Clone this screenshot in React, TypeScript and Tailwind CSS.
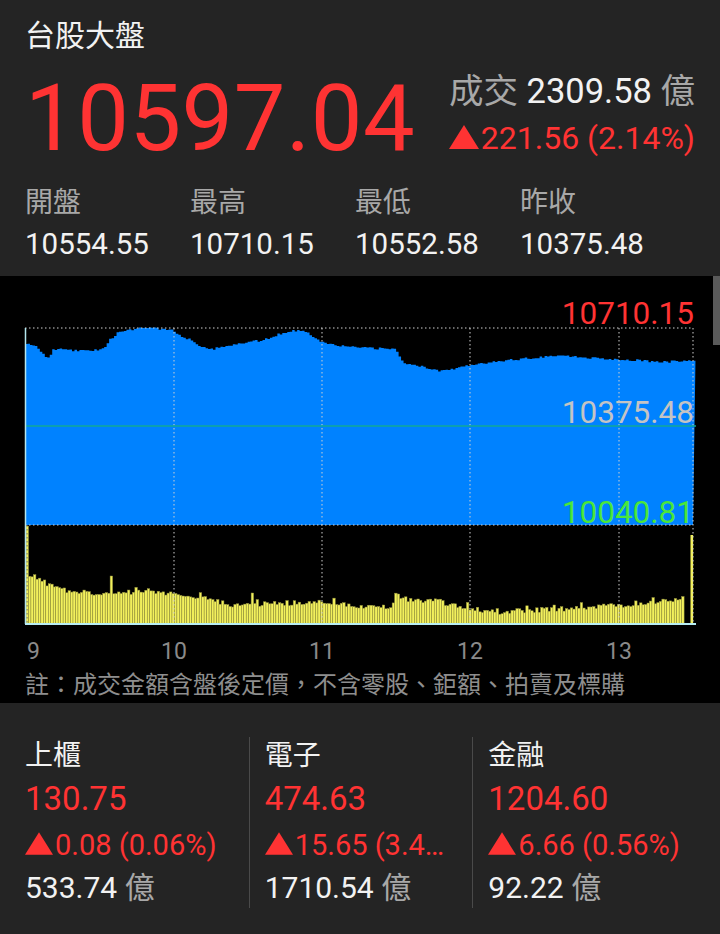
import React from "react";

const FONT = { fontFamily: 'Roboto, "Noto Sans CJK TC", sans-serif' };

// chart geometry, in page pixels
const LEFT = 25;
const RIGHT = 693;
const TOP = 328;
const MID = 426;
const PRICE_BOTTOM = 525;
const VOL_BOTTOM = 624;
const PX_PER_MIN = (RIGHT - LEFT) / 270;

function rng(seed: number) {
  return () => {
    seed = (seed + 0x6d2b79f5) | 0;
    let t = Math.imul(seed ^ (seed >>> 15), 1 | seed);
    t = (t + Math.imul(t ^ (t >>> 7), 61 | t)) ^ t;
    return ((t ^ (t >>> 14)) >>> 0) / 4294967296;
  };
}

function interp(pts: [number, number][], x: number) {
  if (x <= pts[0][0]) return pts[0][1];
  for (let i = 1; i < pts.length; i++) {
    const [x1, y1] = pts[i];
    const [x0, y0] = pts[i - 1];
    if (x <= x1) return y0 + ((x - x0) / (x1 - x0)) * (y1 - y0);
  }
  return pts[pts.length - 1][1];
}

const pricePts: [number, number][] = [
  [26, 345], [30, 344], [35, 346], [40, 352], [45, 357], [49, 357], [52, 350],
  [56, 349], [70, 350], [85, 351], [95, 350], [100, 349], [105, 346], [108, 339],
  [112, 337], [117, 333], [125, 331], [135, 329], [140, 327], [150, 328],
  [160, 329], [170, 330], [175, 332], [180, 336], [190, 340], [200, 346],
  [213, 349], [225, 346], [233, 344], [250, 342], [267, 339], [277, 334],
  [290, 331], [297, 330], [307, 333], [315, 338], [320, 341], [333, 345],
  [360, 348], [395, 349], [398, 355], [403, 363], [427, 368], [440, 371],
  [460, 367], [473, 364], [510, 360], [540, 357], [560, 355], [575, 357],
  [593, 358], [630, 360], [660, 362], [682, 361], [693, 361],
];

const volPts: [number, number][] = [
  [29, 575], [40, 580], [50, 586], [60, 590], [80, 592], [100, 594], [120, 592],
  [173, 593], [200, 598], [233, 605], [270, 604], [300, 603], [333, 602],
  [360, 607], [390, 607], [395, 594], [410, 601], [430, 600], [460, 607],
  [493, 612], [560, 609], [627, 605], [660, 601], [682, 598],
];

const volSpikes: Record<number, number> = { 0: 526, 34: 576, 91: 593, 150: 594, 213: 605 };

function buildChart() {
  const r = rng(7);
  let d = `M${LEFT} ${PRICE_BOTTOM} `;
  for (let m = 0; m <= 270; m++) {
    const x = LEFT + m * PX_PER_MIN;
    const y = interp(pricePts, x) + (r() - 0.5) * 2.2;
    d += `L${x.toFixed(2)} ${y.toFixed(2)} H${(x + PX_PER_MIN).toFixed(2)} `;
  }
  d += `L${RIGHT} ${PRICE_BOTTOM} Z`;

  const bars: { x: number; y: number }[] = [];
  for (let m = 0; m <= 265; m++) {
    const x = LEFT + 1 + m * PX_PER_MIN;
    let y = interp(volPts, x) + (r() - 0.5) * 5;
    if (r() > 0.93) y -= 4;
    if (volSpikes[m] !== undefined) y = volSpikes[m];
    bars.push({ x, y });
  }
  return { d, bars };
}

const { d: pricePath, bars } = buildChart();

function Up({ w, h }: { w: number; h: number }) {
  return (
    <svg width={w} height={h} viewBox="0 0 30 24" className="inline-block align-baseline mr-[2px]">
      <polygon points="15,0 30,24 0,24" fill="#ff3333" />
    </svg>
  );
}

function Chart() {
  const grid = "#d0d0d0";
  const dash = "1.5 2.5";
  return (
    <svg width={720} height={392} viewBox="0 276 720 392" className="block">
      <path d={pricePath} fill="#0082ff" />
      {bars.map((b, i) => (
        <rect
          key={i}
          x={b.x}
          y={b.y}
          width={PX_PER_MIN}
          height={VOL_BOTTOM - b.y}
          fill="#f2f05c"
          stroke="#8f8d3c"
          strokeWidth={0.5}
        />
      ))}
      <rect x={690.5} y={535} width={2.6} height={VOL_BOTTOM - 535} fill="#f2f05c" />
      {[174, 322, 470, 619, RIGHT].map((x) => (
        <line key={x} x1={x} y1={TOP} x2={x} y2={VOL_BOTTOM} stroke={grid} strokeDasharray={dash} />
      ))}
      <line x1={27} y1={PRICE_BOTTOM} x2={27} y2={VOL_BOTTOM} stroke="#666" strokeDasharray={dash} />
      <line x1={LEFT} y1={TOP} x2={RIGHT} y2={TOP} stroke={grid} strokeDasharray={dash} />
      <line x1={LEFT} y1={PRICE_BOTTOM} x2={RIGHT} y2={PRICE_BOTTOM} stroke={grid} strokeDasharray={dash} />
      <line x1={LEFT} y1={MID} x2={696} y2={MID} stroke="#12a896" strokeWidth={1.5} />
      <line x1={LEFT + 0.5} y1={TOP} x2={LEFT + 0.5} y2={VOL_BOTTOM} stroke="#b4e6ee" strokeWidth={1.5} />
      <line x1={LEFT} y1={VOL_BOTTOM} x2={696} y2={VOL_BOTTOM} stroke="#b8eef5" strokeWidth={2} />
      <g style={FONT} fontSize={31.5} textAnchor="end">
        <text x={694} y={324} fill="#ff3333">10710.15</text>
        <text x={694} y={423} fill="#c4c4c4">10375.48</text>
        <text x={694} y={523} fill="#4be63a">10040.81</text>
      </g>
      <g style={FONT} fontSize={23} fill="#8a8a8a" textAnchor="middle">
        <text x={27} y={659} textAnchor="start">9</text>
        <text x={174} y={659}>10</text>
        <text x={322} y={659}>11</text>
        <text x={470} y={659}>12</text>
        <text x={619} y={659}>13</text>
      </g>
    </svg>
  );
}

const stats = [
  { label: "開盤", value: "10554.55" },
  { label: "最高", value: "10710.15" },
  { label: "最低", value: "10552.58" },
  { label: "昨收", value: "10375.48" },
];

const sectors = [
  { name: "上櫃", price: "130.75", change: "0.08 (0.06%)", vol: "533.74" },
  { name: "電子", price: "474.63", change: "15.65 (3.41%)", vol: "1710.54" },
  { name: "金融", price: "1204.60", change: "6.66 (0.56%)", vol: "92.22" },
];

export default function App() {
  return (
    <div className="w-[720px] h-[934px] overflow-hidden bg-[#242424] text-[#f2f2f2]" style={FONT}>
      {/* index header */}
      <div className="h-[276px] px-[25px] pt-[16px]">
        <div className="text-[30px] leading-[40px]">台股大盤</div>
        <div className="flex items-start mt-[13px]">
          <div className="text-[92px] leading-[92px] text-[#ff3333] mt-[4px] tracking-[0.5px]">10597.04</div>
          <div className="ml-auto text-right leading-[47px]">
            <div className="text-[34.5px] -mt-[1px]">
              <span className="text-[#a8a8a8] leading-none">成交</span> 2309.58{" "}
              <span className="text-[#a8a8a8] leading-none">億</span>
            </div>
            <div className="text-[32px] text-[#ff3333]">
              <Up w={30} h={24} />
              221.56 (2.14%)
            </div>
          </div>
        </div>
        <div className="grid grid-cols-[165px_165px_165px_1fr] mt-[20px]">
          {stats.map((s) => (
            <div key={s.label}>
              <div className="text-[28px] leading-[36px] text-[#a8a8a8]">{s.label}</div>
              <div className="text-[29.5px] leading-[40px] mt-[3px]">{s.value}</div>
            </div>
          ))}
        </div>
      </div>

      {/* intraday chart */}
      <div className="relative h-[427px] bg-black">
        <Chart />
        <p className="px-[25px] text-[24px] leading-[35px] text-[#8e8e8e]">
          註：成交金額含盤後定價，不含零股、鉅額、拍賣及標購
        </p>
        <div className="absolute right-0 top-0 w-[7px] h-[69px] bg-[#5a5a5a]" />
      </div>

      {/* sector indices */}
      <div className="pl-[25px] pr-[24px] pt-[34px] grid grid-cols-3">
        {sectors.map((s, i) => (
          <div
            key={s.name}
            className={
              i === 0
                ? "min-w-0 pr-[24px]"
                : i === 1
                  ? "min-w-0 pr-[24px] pl-[15px] border-l border-[#4a4a4a]"
                  : "min-w-0 pr-[8px] pl-[15px] border-l border-[#4a4a4a]"
            }
          >
            <div className="text-[28px] leading-[38px]">{s.name}</div>
            <div className="text-[33px] leading-[47px] text-[#ff3333]">{s.price}</div>
            <div className="text-[29px] leading-[46px] text-[#ff3333] whitespace-nowrap overflow-hidden text-ellipsis">
              <Up w={28} h={23} />
              {s.change}
            </div>
            <div className="text-[30px] leading-[40px]">
              {s.vol} <span className="text-[#a8a8a8] leading-none">億</span>
            </div>
          </div>
        ))}
      </div>
    </div>
  );
}
